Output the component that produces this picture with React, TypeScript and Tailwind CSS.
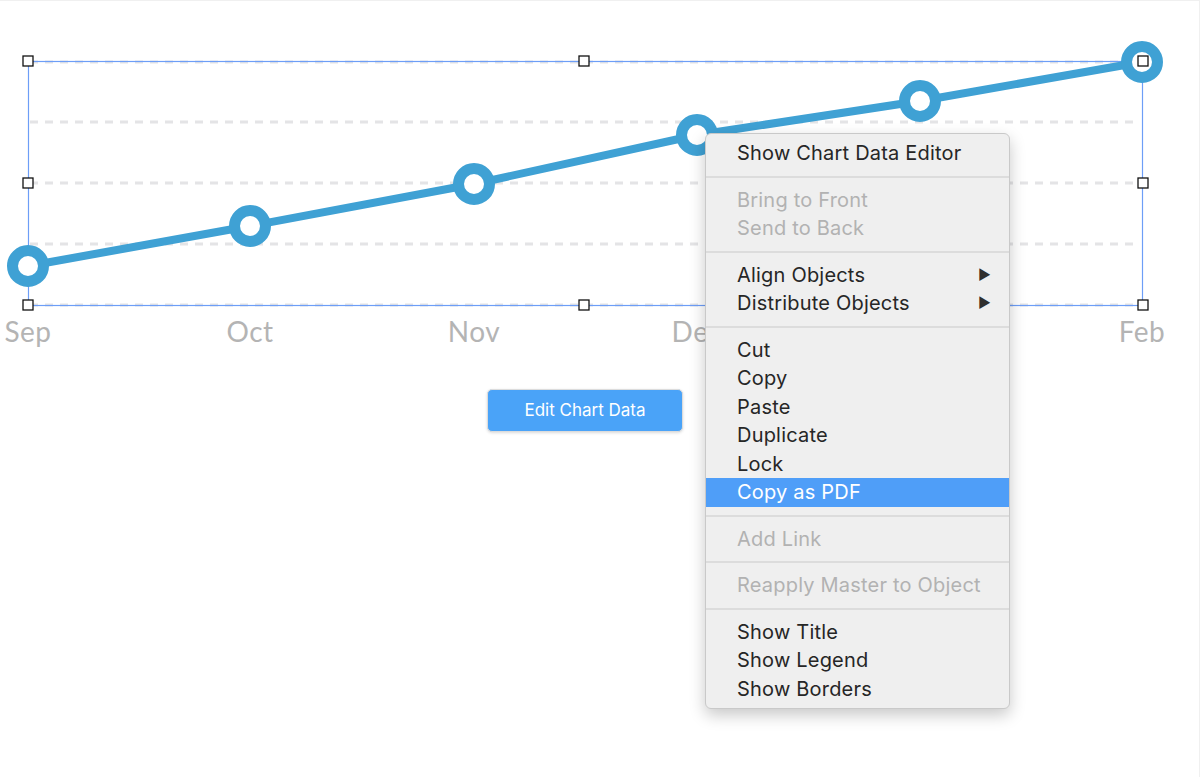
import React from 'react';

const points = [
  { x: 28, y: 265 },
  { x: 250, y: 225 },
  { x: 474, y: 183 },
  { x: 697, y: 134 },
  { x: 920, y: 100 },
  { x: 1142, y: 61 },
];

const labels = [
  { x: 28, t: 'Sep' },
  { x: 250, t: 'Oct' },
  { x: 474, t: 'Nov' },
  { x: 697, t: 'Dec' },
  { x: 920, t: 'Jan' },
  { x: 1142, t: 'Feb' },
];

const handles = [
  [28, 60], [584, 60], [1143, 60],
  [28, 182], [1143, 182],
  [28, 304], [584, 304], [1143, 304],
];

type Item = { label: string; disabled?: boolean; submenu?: boolean; active?: boolean };

const groups: Item[][] = [
  [{ label: 'Show Chart Data Editor' }],
  [{ label: 'Bring to Front', disabled: true }, { label: 'Send to Back', disabled: true }],
  [{ label: 'Align Objects', submenu: true }, { label: 'Distribute Objects', submenu: true }],
  [
    { label: 'Cut' },
    { label: 'Copy' },
    { label: 'Paste' },
    { label: 'Duplicate' },
    { label: 'Lock' },
    { label: 'Copy as PDF', active: true },
  ],
  [{ label: 'Add Link', disabled: true }],
  [{ label: 'Reapply Master to Object', disabled: true }],
  [{ label: 'Show Title' }, { label: 'Show Legend' }, { label: 'Show Borders' }],
];

const Chart: React.FC = () => {
  const path = points.map((p, i) => `${i === 0 ? 'M' : 'L'}${p.x} ${p.y}`).join(' ');
  return (
    <svg width="1200" height="360" className="absolute left-0 top-0">
      {/* grid */}
      {[61, 121, 182, 243, 304].map((y) => (
        <line key={y} x1="30" x2="1140" y1={y} y2={y} stroke="#e4e4e6" strokeWidth="3" strokeDasharray="8 7" />
      ))}
      {/* selection box */}
      <rect x="28.5" y="60.5" width="1114" height="244" fill="none" stroke="#6d9ef7" strokeWidth="1.2" />
      {/* series */}
      <path d={path} fill="none" stroke="#3fa1d4" strokeWidth="8" strokeLinejoin="round" />
      {points.map((p) => (
        <circle key={p.x} cx={p.x} cy={p.y} r="15.5" fill="#fff" stroke="#3fa1d4" strokeWidth="11" />
      ))}
      {/* axis labels */}
      {labels.map((l) => (
        <text
          key={l.t}
          x={l.x}
          y="341"
          textAnchor="middle"
          fill="#b4b4b4"
          fontSize="28"
          letterSpacing="0.5"
          fontFamily="Lato, 'Open Sans', sans-serif"
        >
          {l.t}
        </text>
      ))}
      {/* handles */}
      {handles.map(([x, y]) => (
        <rect key={`${x}-${y}`} x={x - 5} y={y - 5} width="10" height="10" fill="#fff" stroke="#111" strokeWidth="1.3" />
      ))}
    </svg>
  );
};

const ContextMenu: React.FC = () => (
  <div
    className="absolute left-[705px] top-[132px] w-[305px] rounded-[6px] border border-[#c9c9c9] bg-[#efefef] pt-[5px] pb-[5px] shadow-[0_6px_16px_rgba(0,0,0,0.22)] text-[20px] tracking-[0.2px] text-[#262626]"
    style={{ fontFamily: "Inter, 'Noto Sans', sans-serif" }}
  >
    {groups.map((g, gi) => (
      <div key={gi}>
        {gi > 0 && (
          <div className="flex h-[18px] items-center">
            <div className="h-[2px] w-full bg-[#dcdcdc]" />
          </div>
        )}
        {g.map((it) => (
          <div
            key={it.label}
            className={`flex h-[28.5px] items-center justify-between pl-[31px] pr-[18px] ${
              it.active ? 'bg-[#4f9ef8] text-white' : it.disabled ? 'text-[#b2b2b2]' : ''
            }`}
          >
            <span className="leading-none">{it.label}</span>
            {it.submenu && <span className="text-[14px] leading-none text-[#2f2f2f]">▶</span>}
          </div>
        ))}
      </div>
    ))}
  </div>
);

export default function App() {
  return (
    <div className="relative h-[777px] w-[1200px] overflow-hidden border-t border-r border-[#f0f0f0] bg-white">
      <Chart />
      <button
        className="absolute left-[487px] top-[388px] flex h-[43px] w-[196px] items-center justify-center rounded-[5px] border border-[#dcdcdc] bg-[#4aa3f8] text-[17px] text-white shadow-[0_1px_3px_rgba(0,0,0,0.15)]"
        style={{ fontFamily: "Inter, 'Noto Sans', sans-serif" }}
      >
        Edit Chart Data
      </button>
      <ContextMenu />
    </div>
  );
}
